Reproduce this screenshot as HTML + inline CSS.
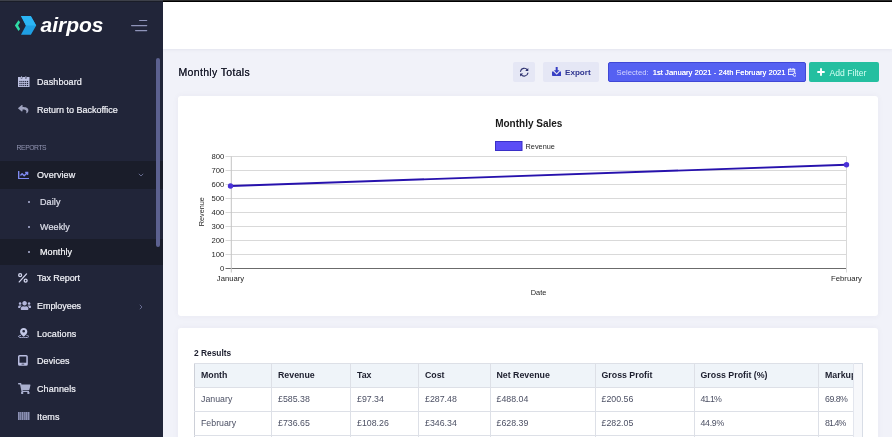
<!DOCTYPE html>
<html lang="en">
<head>
<meta charset="utf-8">
<title>Airpos - Monthly Totals</title>
<style>
*{box-sizing:border-box;margin:0;padding:0}
html,body{width:892px;height:437px;overflow:hidden}
body{position:relative;background:#f1f2f9;font-family:"Liberation Sans",sans-serif;color:#3f4254;font-size:9px}
.abs{position:absolute}
#topline{left:163px;top:0;width:729px;height:2px;background:linear-gradient(#2b2b2b 0,#2b2b2b 50%,#000 50%,#000 100%);z-index:10}
#topline2{left:0;top:0;width:163px;height:2px;background:linear-gradient(#3d4049 0,#3d4049 50%,#1a1d28 50%,#1a1d28 100%);z-index:10}
#sidebar{left:0;top:0;width:163px;height:437px;background:#212539;color:#fff}
#header{left:163px;top:0;width:729px;height:49px;background:#fff;box-shadow:0 1px 3px rgba(80,80,120,.08)}
#logo-text{left:40.500px;top:12px;font-size:21px;font-weight:bold;font-style:italic;color:#fff;letter-spacing:0;line-height:26px}
.nav{left:0;width:163px;height:26px}
.nav span{position:absolute;left:37px;top:0;line-height:26px;font-size:9px;color:#f1f2f8;letter-spacing:.1px;white-space:nowrap;-webkit-text-stroke:.2px #f1f2f8}
.sub span{left:40px;color:#cfd1e0}
.sub i{position:absolute;left:27.500px;top:11.500px;width:2.400px;height:2.400px;border-radius:2px;background:#b0b4d8}
.section{left:16.600px;top:142.800px;font-size:6.800px;letter-spacing:-.45px;color:#9396b3;line-height:10px}
#sbscroll{left:156px;top:58px;width:4px;height:189px;border-radius:2px;background:#5c6190}
.card{left:178px;width:700px;background:#fff;border-radius:3px;box-shadow:0 0 6px rgba(82,63,105,.05)}
h1{position:absolute;left:178.500px;top:64px;font-size:10.500px;font-weight:normal;color:#1c1e2e;line-height:16px;letter-spacing:.33px;text-shadow:0 0 .3px #1c1e2e}
.btn{top:61.800px;height:20.600px;border-radius:2px;line-height:21.400px;font-size:8px;white-space:nowrap}
table{border-collapse:collapse;font-size:8.8px;table-layout:fixed;width:715px;background:#fff}
th,td{border:1px solid #dde0e7;height:24px;padding:0 0 .8px 6px;text-align:left;white-space:nowrap;overflow:hidden}
th{background:#eff4f9;color:#1c1e2e;font-weight:bold;letter-spacing:0;padding-bottom:1.700px}
td{color:#4c5064;letter-spacing:0}
tr>*:first-child{border-left-color:#cdd0d8}
</style>
</head>
<body>
<div id="root" class="abs" style="left:0;top:0;width:892px;height:437px;will-change:transform">
<div id="header" class="abs"></div>

<div id="sidebar" class="abs">
  <svg class="abs" style="left:14px;top:15px" width="24" height="21" viewBox="14 15 24 21">
    <path d="M21 16 H30.800 L36.200 25.400 L30.900 34.800 H21 L25.900 25.400 Z" fill="#1f9fe3"/>
    <path d="M21 16 H30.800 L36.200 25.400 H25.900 Z" fill="#2bb5f5"/>
    <path d="M14.900 25.600 L18.500 20.200 L20.100 22.200 L18.100 25.600 L20.100 29 L18.500 31 Z" fill="#2fdca6"/>
  </svg>
  <div id="logo-text" class="abs">airpos</div>
  <svg class="abs" style="left:130px;top:18px" width="18" height="14" viewBox="130 18 18 14">
    <rect x="139" y="19.900" width="8.300" height="1.200" rx=".6" fill="#8f94ba"/>
    <rect x="131" y="25" width="16.300" height="1.200" rx=".6" fill="#8f94ba"/>
    <rect x="135" y="30" width="12.300" height="1.200" rx=".6" fill="#8f94ba"/>
  </svg>

  <div class="abs nav" style="top:69px"><svg class="abs" style="left:18px;top:7px" width="11.600" height="11" viewBox="0 0 11.600 11"><path fill="#bdc1e2" d="M0 1 H2.800 V2.400 H4.300 V1 H7.100 V2.400 H8.600 V1 H11.500 V11 H0 Z"/><path fill="#bdc1e2" d="M3.100 .2 H4 V1.900 H3.100 Z M7.400 .2 H8.300 V1.900 H7.400 Z"/><g fill="#212539"><rect x="1.40" y="4.90" width="1.15" height="1.2"/><rect x="3.30" y="4.90" width="1.15" height="1.2"/><rect x="5.20" y="4.90" width="1.15" height="1.2"/><rect x="7.10" y="4.90" width="1.15" height="1.2"/><rect x="9.00" y="4.90" width="1.15" height="1.2"/><rect x="1.40" y="6.90" width="1.15" height="1.2"/><rect x="3.30" y="6.90" width="1.15" height="1.2"/><rect x="5.20" y="6.90" width="1.15" height="1.2"/><rect x="7.10" y="6.90" width="1.15" height="1.2"/><rect x="9.00" y="6.90" width="1.15" height="1.2"/><rect x="1.40" y="8.90" width="1.15" height="1.2"/><rect x="3.30" y="8.90" width="1.15" height="1.2"/><rect x="5.20" y="8.90" width="1.15" height="1.2"/><rect x="7.10" y="8.90" width="1.15" height="1.2"/><rect x="9.00" y="8.90" width="1.15" height="1.2"/></g></svg><span>Dashboard</span></div>
  <div class="abs nav" style="top:97px"><svg class="abs" style="left:18.300px;top:8.300px" width="10.400" height="8.300" viewBox="0 32 512 448" preserveAspectRatio="none"><path fill="#9ea2be" d="M8.309 189.836L184.313 37.851C199.719 24.546 224 35.347 224 56.015v80.053c160.629 1.839 288 34.032 288 186.258 0 61.441-39.581 122.309-83.333 154.132-13.653 9.931-33.111-2.533-28.077-18.631 45.344-145.012-21.507-183.51-176.59-185.742V360c0 20.7-24.3 31.453-39.687 18.164l-176.004-152c-11.071-9.562-11.086-26.753 0-36.328z"/></svg><span style="letter-spacing:0">Return to Backoffice</span></div>
  <div class="abs section">REPORTS</div>
  <div class="abs nav" style="top:161px;background:#1a1d2a;height:28px"><svg class="abs" style="left:17.800px;top:9.600px" width="11" height="8.300" viewBox="0 64 512 384"><path fill="#7f8bf2" d="M496 384H64V80c0-8.840-7.160-16-16-16H16C7.160 64 0 71.160 0 80v336c0 17.670 14.330 32 32 32h464c8.840 0 16-7.160 16-16v-32c0-8.840-7.160-16-16-16zM464 96H345.940c-21.380 0-32.090 25.850-16.970 40.970l32.400 32.400L288 242.750l-73.370-73.370c-12.500-12.500-32.760-12.500-45.250 0l-68.690 68.690c-6.250 6.250-6.250 16.380 0 22.630l22.620 22.620c6.250 6.250 16.380 6.250 22.630 0L192 237.250l73.370 73.370c12.500 12.500 32.760 12.500 45.250 0l96-96 32.400 32.400c15.120 15.120 40.970 4.410 40.970-16.970V112c.01-8.840-7.150-16-15.990-16z"/></svg><span style="line-height:28px">Overview</span><svg class="abs" style="left:137.500px;top:12px" width="6" height="4" viewBox="0 0 6 4"><path d="M.8 .8 L3 3 L5.200 .8" fill="none" stroke="#6d7299" stroke-width=".9"/></svg></div>
  <div class="abs nav sub" style="top:189px"><i></i><span>Daily</span></div>
  <div class="abs nav sub" style="top:214px"><i></i><span>Weekly</span></div>
  <div class="abs nav sub" style="top:239px;background:#1a1d2a"><i></i><span style="color:#fff">Monthly</span></div>
  <div class="abs nav" style="top:265px"><svg class="abs" style="left:18px;top:8px" width="9.8" height="9.8" viewBox="0 0 10 10"><g fill="none" stroke="#d3d6ee" stroke-width="1.350"><circle cx="2.2" cy="2.2" r="1.5"/><circle cx="7.8" cy="7.8" r="1.5"/><line x1="8.7" y1="0.9" x2="1.3" y2="9.1" stroke-linecap="round"/></g></svg><span style="letter-spacing:-.05px">Tax Report</span></div>
  <div class="abs nav" style="top:293px"><svg class="abs" style="left:18px;top:8.2px" width="13.2" height="9" viewBox="0 32 640 448"><path fill="#b3b7dc" d="M96 224c35.300 0 64-28.700 64-64s-28.700-64-64-64-64 28.700-64 64 28.700 64 64 64zm448 0c35.300 0 64-28.700 64-64s-28.700-64-64-64-64 28.700-64 64 28.700 64 64 64zm32 32h-64c-17.600 0-33.500 7.100-45.100 18.600 40.300 22.100 68.900 62 75.100 109.400h66c17.700 0 32-14.300 32-32v-32c0-35.300-28.700-64-64-64zm-256 0c61.900 0 112-50.100 112-112S381.900 32 320 32 208 82.100 208 144s50.100 112 112 112zm76.800 32h-8.300c-20.800 10-43.900 16-68.500 16s-47.600-6-68.500-16h-8.300C179.600 288 128 339.600 128 403.200V432c0 26.500 21.500 48 48 48h288c26.500 0 48-21.500 48-48v-28.800c0-63.600-51.600-115.200-115.200-115.200zm-223.700-13.400C161.500 263.100 145.600 256 128 256H64c-35.300 0-64 28.700-64 64v32c0 17.700 14.300 32 32 32h65.900c6.300-47.400 34.900-87.300 75.200-109.400z"/></svg><span style="letter-spacing:-.05px">Employees</span><svg class="abs" style="left:138.500px;top:10.500px" width="4" height="6" viewBox="0 0 4 6"><path d="M.8 .8 L3 3 L.8 5.200" fill="none" stroke="#6d7299" stroke-width=".9"/></svg></div>
  <div class="abs nav" style="top:321px"><svg class="abs" style="left:17.800px;top:7.200px" width="11.400" height="10.200" viewBox="0 0 11.400 10.200"><path fill="#c3c8e6" fill-rule="evenodd" d="M5.700 .1 C3.600 .1 2.050 1.700 2.050 3.700 C2.050 5.600 4.300 7.400 5.700 8.800 C7.100 7.400 9.350 5.600 9.350 3.700 C9.350 1.700 7.800 .1 5.700 .1 Z M5.700 2.100 A1.350 1.200 0 1 1 5.700 4.500 A1.350 1.200 0 1 1 5.700 2.100 Z"/><path fill="none" stroke="#a9aed2" stroke-width="1" d="M3 7.300 C1.400 7.600 .5 8 .5 8.500 C.5 9.300 2.600 9.700 5.700 9.700 C8.800 9.700 10.900 9.300 10.900 8.500 C10.900 8 10 7.600 8.400 7.300"/></svg><span>Locations</span></div>
  <div class="abs nav" style="top:348px"><svg class="abs" style="left:18px;top:7.400px" width="9.800" height="10.800" viewBox="0 0 9.800 10.800"><path fill="#b9bde0" fill-rule="evenodd" d="M1.600 0 H8.200 Q9.800 0 9.800 1.600 V9.200 Q9.800 10.800 8.200 10.800 H1.600 Q0 10.800 0 9.200 V1.600 Q0 0 1.600 0 Z M1.500 1.500 V7.700 H8.300 V1.500 Z M3.600 8.700 V9.600 H6.200 V8.700 Z"/></svg><span>Devices</span></div>
  <div class="abs nav" style="top:376px"><svg class="abs" style="left:18px;top:6.8px" width="12.5" height="11.1" viewBox="0 0 576 512"><path fill="#aab0cf" d="M528.120 301.319l47.273-208C578.806 78.301 567.391 64 551.990 64H159.208l-9.166-44.810C147.758 8.021 137.930 0 126.529 0H24C10.745 0 0 10.745 0 24v16c0 13.255 10.745 24 24 24h69.883l70.248 343.435C147.325 417.100 136 435.222 136 456c0 30.928 25.072 56 56 56s56-25.072 56-56c0-15.674-6.447-29.835-16.824-40h209.647C430.447 426.165 424 440.326 424 456c0 30.928 25.072 56 56 56s56-25.072 56-56c0-22.172-12.888-41.332-31.579-50.405l5.517-24.276c3.413-15.018-8.002-29.319-23.403-29.319H218.117l-6.545-32h293.145c11.206 0 20.920-7.754 23.403-18.681z"/></svg><span>Channels</span></div>
  <div class="abs nav" style="top:404px"><svg class="abs" style="left:18px;top:8px" width="11.500" height="8.400" viewBox="0 0 11.500 8.400"><g fill="#8d92b6"><rect x="0" y="0" width="1.700" height="8.400"/><rect x="2.100" y="0" width="1" height="8.400"/><rect x="3.500" y="0" width="2" height="8.400"/><rect x="5.900" y="0" width="1" height="8.400"/><rect x="7.300" y="0" width="1.700" height="8.400"/><rect x="9.400" y="0" width="2.100" height="8.400"/></g></svg><span>Items</span></div>
  <div id="sbscroll" class="abs"></div>
</div>

<h1>Monthly Totals</h1>

<div class="abs btn" style="left:513px;width:22px;background:#e5e7f5">
  <svg class="abs" style="left:5.800px;top:5.200px" width="10.400" height="10.400" viewBox="0 0 10.400 10.400"><g fill="none" stroke="#2b2f6e" stroke-width="1.150" stroke-linecap="round"><path d="M1.500 4.300 A3.800 3.800 0 0 1 8.300 2.900"/><path d="M8.900 6.100 A3.800 3.800 0 0 1 2.100 7.500"/></g><path fill="#2b2f6e" d="M9.300 .9 V4 H6.200 Z M1.100 9.500 V6.400 H4.200 Z"/></svg>
</div>
<div class="abs btn" style="left:543px;width:56px;background:#e5e7f5;color:#2e3490;font-weight:bold;padding-left:22px;font-size:8.100px">
  <svg class="abs" style="left:9px;top:5.600px" width="9.400" height="9" viewBox="0 0 9.400 9"><path fill="#3840c4" d="M3.700 0 H5.700 V3.200 H7.500 L4.700 6.200 L1.900 3.200 H3.700 Z"/><path fill="#3840c4" d="M0 4.600 H1.500 L4.700 7.700 L7.900 4.600 H9.400 V8.200 Q9.400 9 8.600 9 H.8 Q0 9 0 8.200 Z"/></svg>Export</div>
<div class="abs btn" style="left:608px;width:197.600px;background:#5561f2;border:1px solid #3f47d6;color:#fff;padding-left:7.600px;font-size:7.700px;line-height:19.400px"><span style="color:#d3d6ff">Selected:</span><span style="padding-left:4px;text-shadow:0 0 .4px #fff">1st January 2021 - 24th February 2021</span>
  <svg class="abs" style="left:178.800px;top:5.200px" width="8.600" height="8.600" viewBox="0 0 9 9"><g fill="none" stroke="#fff" stroke-width=".9"><rect x=".5" y="1.300" width="6.600" height="5.600"/><line x1=".5" y1="3.300" x2="7.100" y2="3.300"/><line x1="2.300" y1="0" x2="2.300" y2="2"/><line x1="5.300" y1="0" x2="5.300" y2="2"/><circle cx="7" cy="7" r="1.700" fill="#5561f2"/></g></svg>
</div>
<div class="abs btn" style="left:809px;width:70px;background:#24bfa0;color:#d4fff3;padding-left:20.600px;font-size:8.600px;line-height:22.800px">
  <svg class="abs" style="left:8.300px;top:6.200px" width="8" height="8" viewBox="0 0 8 8"><path d="M4 .3 V7.700 M.3 4 H7.700" stroke="#fff" stroke-width="1.900" fill="none"/></svg>Add Filter</div>

<div class="abs card" style="top:96px;height:220px" id="card1"></div>
<svg class="abs" style="left:178px;top:96px" width="700" height="220" viewBox="178 96 700 220" font-family="'Liberation Sans',sans-serif" font-size="7.7" fill="#1f1f1f">
<line x1="225.5" y1="156.50" x2="846.5" y2="156.50" stroke="#d9d9d9" stroke-width="1"/>
<text x="224.3" y="159.30" text-anchor="end">800</text>
<line x1="225.5" y1="170.50" x2="846.5" y2="170.50" stroke="#d9d9d9" stroke-width="1"/>
<text x="224.3" y="173.30" text-anchor="end">700</text>
<line x1="225.5" y1="184.50" x2="846.5" y2="184.50" stroke="#d9d9d9" stroke-width="1"/>
<text x="224.3" y="187.30" text-anchor="end">600</text>
<line x1="225.5" y1="198.50" x2="846.5" y2="198.50" stroke="#d9d9d9" stroke-width="1"/>
<text x="224.3" y="201.30" text-anchor="end">500</text>
<line x1="225.5" y1="212.50" x2="846.5" y2="212.50" stroke="#d9d9d9" stroke-width="1"/>
<text x="224.3" y="215.30" text-anchor="end">400</text>
<line x1="225.5" y1="226.50" x2="846.5" y2="226.50" stroke="#d9d9d9" stroke-width="1"/>
<text x="224.3" y="229.30" text-anchor="end">300</text>
<line x1="225.5" y1="240.50" x2="846.5" y2="240.50" stroke="#d9d9d9" stroke-width="1"/>
<text x="224.3" y="243.30" text-anchor="end">200</text>
<line x1="225.5" y1="254.50" x2="846.5" y2="254.50" stroke="#d9d9d9" stroke-width="1"/>
<text x="224.3" y="257.30" text-anchor="end">100</text>
<line x1="225.5" y1="268.50" x2="846.5" y2="268.50" stroke="#6b6b6b" stroke-width="1"/>
<text x="224.3" y="271.30" text-anchor="end">0</text>
<line x1="231.300" y1="156.500" x2="231.300" y2="272.500" stroke="#c4c4c4" stroke-width="1"/>
<line x1="846.5" y1="156.5" x2="846.5" y2="272.5" stroke="#d9d9d9" stroke-width="1"/>
<line x1="230.500" y1="185.950" x2="846.500" y2="164.800" stroke="#2712ad" stroke-width="1.900"/>
<circle cx="230.500" cy="185.950" r="2.700" fill="#4a32d8"/>
<circle cx="846.500" cy="164.800" r="2.700" fill="#4a32d8"/>
<text x="528.800" y="127.200" text-anchor="middle" font-size="10" font-weight="bold" fill="#1a1a1a">Monthly Sales</text>
<rect x="495.5" y="141.5" width="26.5" height="9" fill="#5b4df6" stroke="#3a2fc8" stroke-width="1"/>
<text x="525.600" y="148.600" font-size="7.300">Revenue</text>
<text x="230.5" y="280.6" text-anchor="middle">January</text>
<text x="846.5" y="280.6" text-anchor="middle">February</text>
<text x="538.500" y="294.900" text-anchor="middle" font-size="7.400">Date</text>
<text transform="translate(204.300 211.700) rotate(-90)" text-anchor="middle" font-size="7.300">Revenue</text>
</svg>
<div class="abs card" style="top:328px;height:120px" id="card2"></div>

<div class="abs" style="left:194px;top:346.300px;font-size:8.400px;font-weight:bold;color:#1c1e2e;line-height:14px;letter-spacing:0" id="results">2 Results</div>
<div class="abs" id="twrap" style="left:194px;top:363px;width:669.300px;height:80px;border-top:1px solid #d8dde6;border-right:1px solid #d8dde6;background:#f7f8fb"></div>
<div class="abs" id="tclip" style="left:194px;top:363px;width:660px;height:80px;overflow:hidden;border-right:1px solid #e3e6ee">
<table>
<colgroup><col style="width:77px"><col style="width:79px"><col style="width:68px"><col style="width:71.5px"><col style="width:105px"><col style="width:99px"><col style="width:124.500px"><col style="width:90px"></colgroup>
<thead><tr><th>Month</th><th>Revenue</th><th>Tax</th><th>Cost</th><th>Net Revenue</th><th>Gross Profit</th><th>Gross Profit (%)</th><th>Markup (%)</th></tr></thead>
<tbody>
<tr><td>January</td><td>£585.38</td><td>£97.34</td><td>£287.48</td><td>£488.04</td><td>£200.56</td><td style="letter-spacing:-.9px">41.1%</td><td style="letter-spacing:-.5px">69.8%</td></tr>
<tr><td>February</td><td>£736.65</td><td>£108.26</td><td>£346.34</td><td>£628.39</td><td>£282.05</td><td style="letter-spacing:-.3px">44.9%</td><td style="letter-spacing:-.9px">81.4%</td></tr>
<tr><td>&nbsp;</td><td></td><td></td><td></td><td></td><td></td><td></td><td></td></tr>
</tbody>
</table>
</div>
<div id="topline" class="abs"></div>
<div id="topline2" class="abs"></div>
</div>
</body>
</html>
